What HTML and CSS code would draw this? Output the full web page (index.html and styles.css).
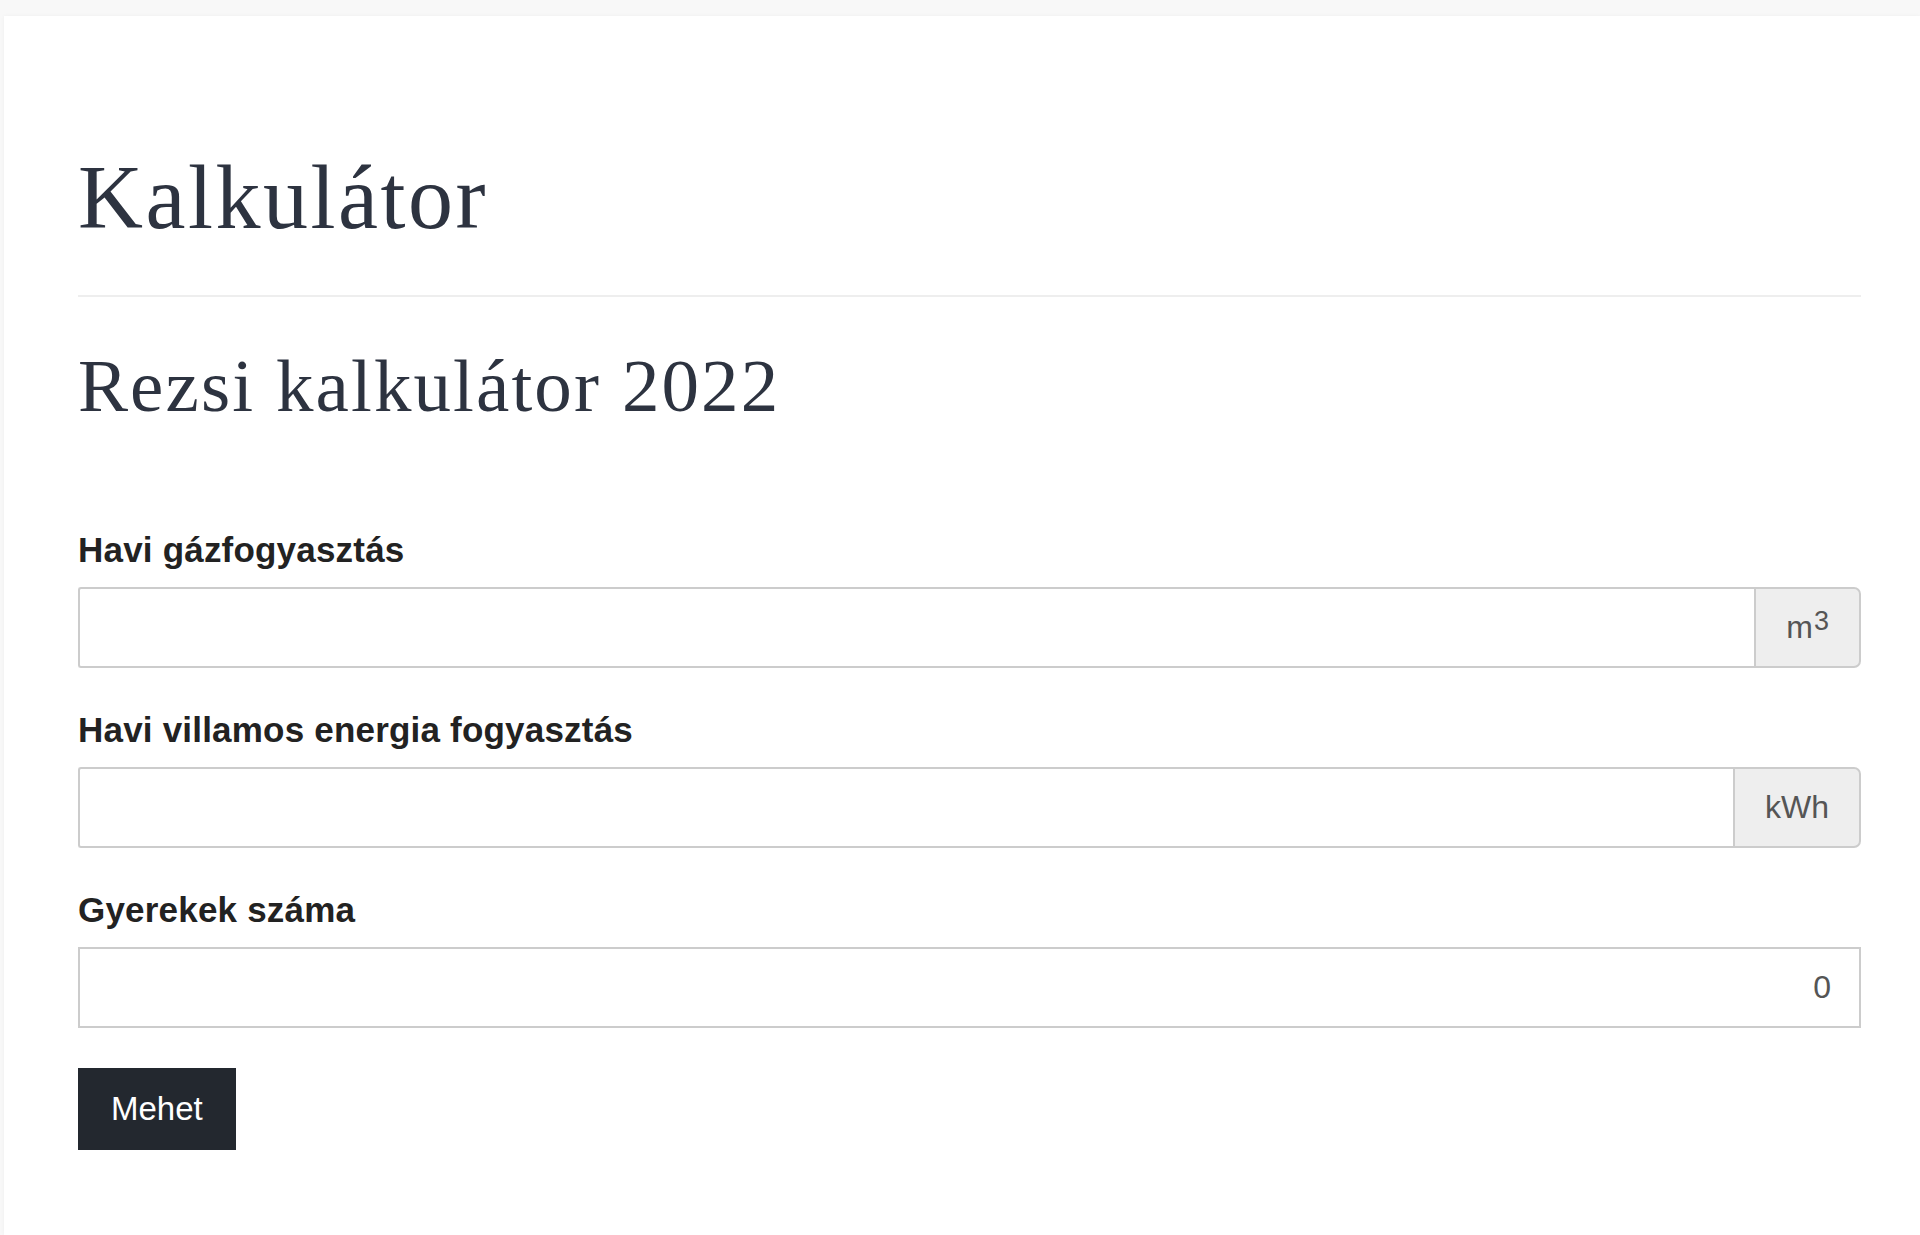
FILE: index.html
```html
<!DOCTYPE html>
<html lang="hu">

<head>
  <meta charset="UTF-8">
  <meta name="viewport" content="width=device-width, initial-scale=1.0">
  <title>Kalkulátor</title>
  <link rel="stylesheet" href="styles.css">
</head>

<body>

  <div class="page">
    <h1 class="page-title">Kalkulátor</h1>
    <hr class="divider">

    <h2 class="calc-title">Rezsi kalkulátor 2022</h2>

    <form class="calc-form" onsubmit="return false;">
      <div class="field">
        <label class="field-label" for="gas">Havi gázfogyasztás</label>
        <div class="input-group">
          <input class="input" type="text" id="gas">
          <span class="addon">m<sup>3</sup></span>
        </div>
      </div>

      <div class="field">
        <label class="field-label" for="power">Havi villamos energia fogyasztás</label>
        <div class="input-group">
          <input class="input" type="text" id="power">
          <span class="addon">kWh</span>
        </div>
      </div>

      <div class="field field-last">
        <label class="field-label" for="kids">Gyerekek száma</label>
        <input class="input input-plain" type="number" id="kids" value="0" min="0">
      </div>

      <button class="btn-go" type="submit">Mehet</button>
    </form>
  </div>

</body>

</html>
```

FILE: styles.css
```css
body {
  margin: 0;
  padding: 16px 0 0 0;
  background-color: #f8f8f8;
  font-family: 'Liberation Sans', Arial, sans-serif;
}

.page {
  box-sizing: border-box;
  min-height: calc(100vh - 16px);
  margin-left: 4px;
  padding: 132px 59px 60px 74px;
  background-color: #fff;
  box-shadow: 0 0 4px rgba(0, 0, 0, 0.04);
}

.page-title,
.calc-title {
  font-family: 'Liberation Serif', 'Times New Roman', serif;
  font-weight: normal;
  color: #2d3340;
  letter-spacing: 0.028em;
  line-height: 1.1;
  margin: 0;
}

.page-title {
  font-size: 90px;
}

.divider {
  border: 0;
  border-top: 2px solid #eeeeee;
  margin: 48px 0 48px 0;
}

.calc-title {
  font-size: 75px;
  margin-bottom: 101px;
}

.field {
  margin-bottom: 41px;
}

.field-last {
  margin-bottom: 40px;
}

.field-label {
  display: block;
  font-size: 35px;
  font-weight: bold;
  line-height: 1.2;
  letter-spacing: 0.2px;
  color: #222;
  margin-bottom: 16px;
}

.input-group {
  display: flex;
  height: 81px;
}

.input {
  box-sizing: border-box;
  height: 81px;
  width: 100%;
  margin: 0;
  padding: 0 28px;
  border: 2px solid #cccccc;
  font-family: 'Liberation Sans', Arial, sans-serif;
  font-size: 32px;
  color: #555;
  background: #fff;
  outline: none;
}

.input-group .input {
  flex: 1;
  border-right: 0;
  border-radius: 3px 0 0 3px;
}

.input-plain {
  display: block;
  border-radius: 0;
  text-align: right;
  -moz-appearance: textfield;
}

.input-plain::-webkit-outer-spin-button,
.input-plain::-webkit-inner-spin-button {
  -webkit-appearance: none;
  margin: 0;
}

.addon {
  display: flex;
  align-items: center;
  padding: 0 30px;
  border: 2px solid #cccccc;
  border-radius: 0 7px 7px 0;
  background-color: #eeeeee;
  font-size: 32px;
  color: #555;
}

.addon sup {
  font-size: 27px;
  line-height: 0;
  vertical-align: baseline;
  position: relative;
  top: -6px;
  margin-left: 1px;
}

.btn-go {
  display: block;
  height: 82px;
  padding: 0 33px;
  border: none;
  border-radius: 0;
  background-color: #23282f;
  color: #fff;
  font-family: 'Liberation Sans', Arial, sans-serif;
  font-size: 33px;
  cursor: pointer;
}
```
